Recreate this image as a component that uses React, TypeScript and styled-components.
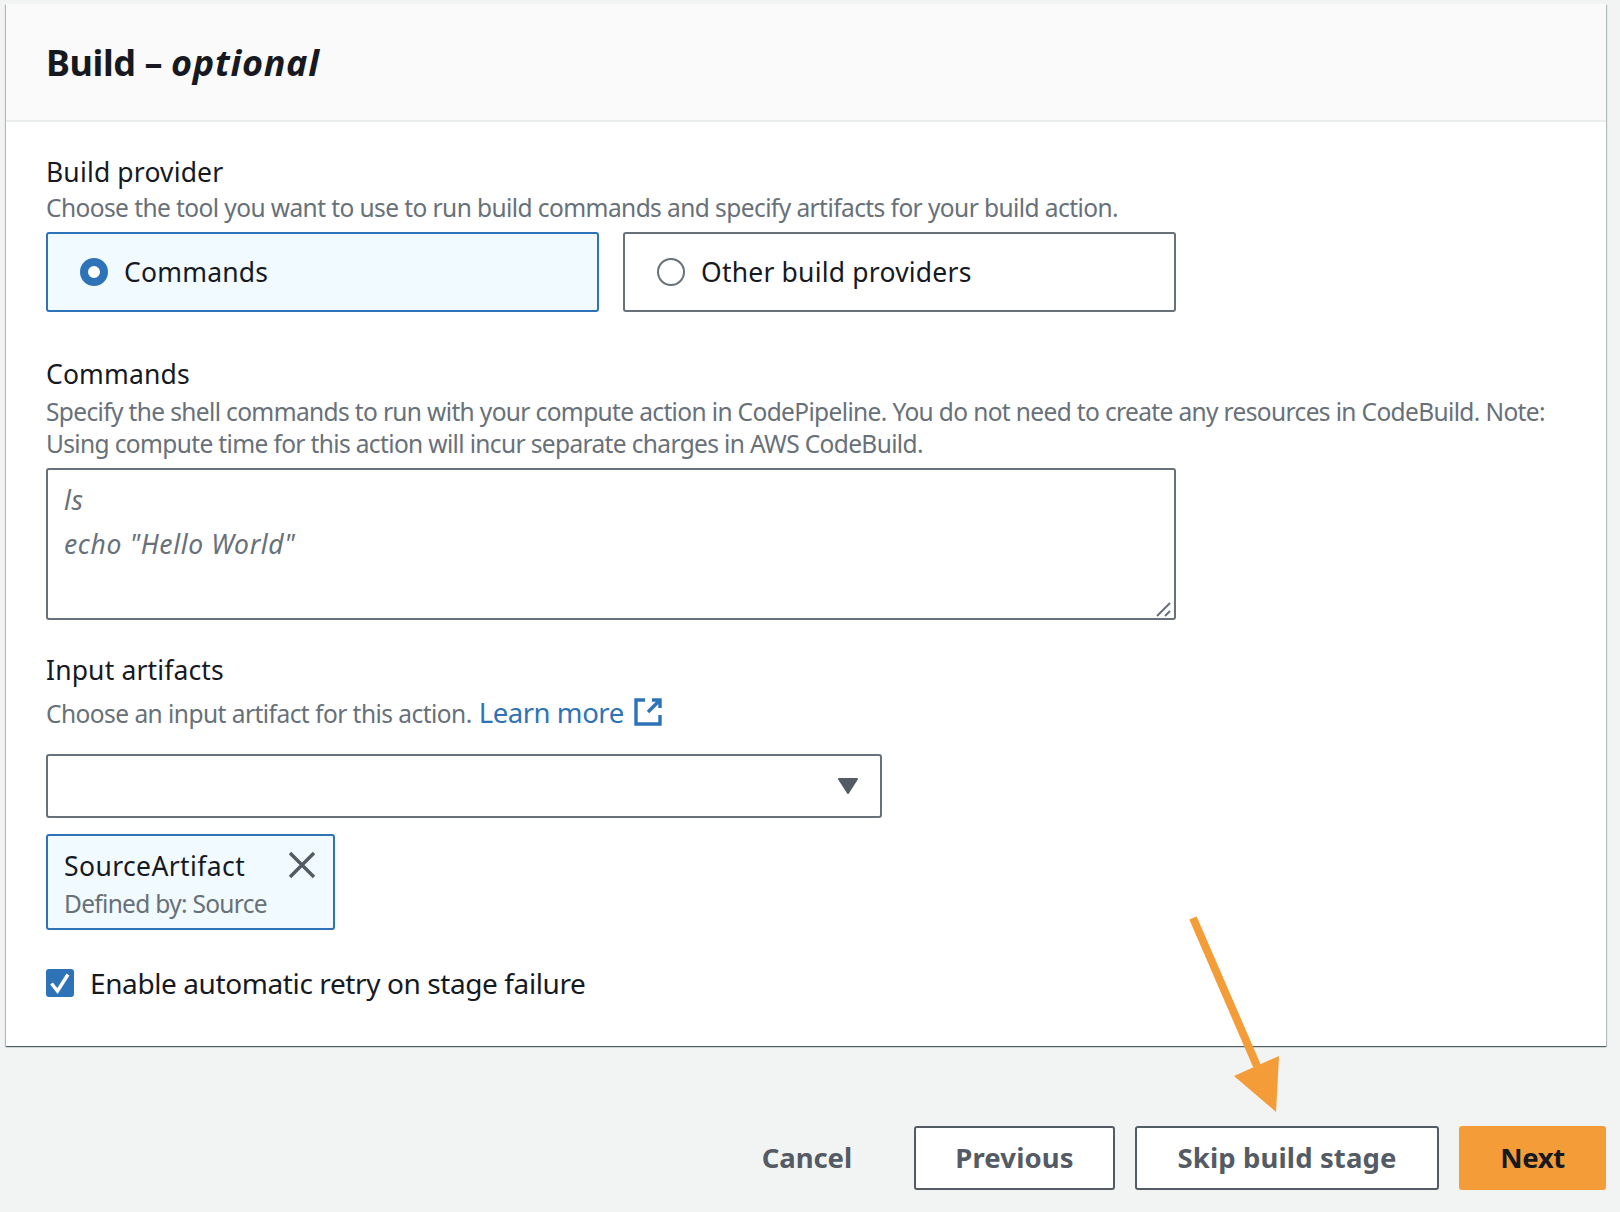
import React from "react";
import styled, { createGlobalStyle } from "styled-components";

const Global = createGlobalStyle`
  html, body { margin: 0; padding: 0; background: #f2f3f3; }
  * { box-sizing: border-box; }
`;

const Page = styled.div`
  position: relative;
  width: 1620px;
  height: 1212px;
  overflow: hidden;
  padding: 4px 14px 0 6px;
  background: #f2f3f3;
  font-family: "Noto Sans", sans-serif;
  color: #16191f;
`;

const Card = styled.section`
  height: 1042px;
  background: #fff;
  box-shadow: 0 1px 1px 0 rgba(0, 28, 36, 0.5), 1px 1px 1px 0 rgba(0, 28, 36, 0.2), -1px 1px 1px 0 rgba(0, 28, 36, 0.2);
`;

const Header = styled.header`
  height: 118px;
  display: flex;
  align-items: center;
  padding: 1px 40px 0;
  background: #fafafa;
  border-bottom: 2px solid #eaeded;
`;

const Title = styled.h2`
  margin: 0;
  font-size: 36px;
  font-weight: 700;
  line-height: 44px;
  letter-spacing: -0.4px;
  em { font-style: italic; letter-spacing: 0.7px; }
`;

const Body = styled.div`
  padding: 30px 40px 0;
`;

const Label = styled.div`
  font-size: 26.5px;
  line-height: 40px;
  letter-spacing: 0.15px;
`;

const Desc = styled.div<{ $mt?: number; $ls?: number }>`
  font-size: 24.5px;
  line-height: 32px;
  color: #687078;
  letter-spacing: ${(p) => p.$ls ?? -0.6}px;
  margin-top: ${(p) => p.$mt ?? 0}px;
`;

const Tiles = styled.div`
  display: flex;
  gap: 24px;
  width: 1130px;
  margin-top: 8px;
`;

const Tile = styled.div<{ $on?: boolean }>`
  flex: 1;
  height: 80px;
  display: flex;
  align-items: center;
  gap: 16px;
  padding-left: 32px;
  border: 2px solid ${(p) => (p.$on ? "#2e73b8" : "#687078")};
  border-radius: 3px;
  background: ${(p) => (p.$on ? "#f1faff" : "#fff")};
`;

const Radio = styled.span<{ $on?: boolean }>`
  width: 28px;
  height: 28px;
  flex: none;
  border-radius: 50%;
  background: #fff;
  border: ${(p) => (p.$on ? "8.5px solid #2e73b8" : "2px solid #687078")};
`;

const TileText = styled.span`
  font-size: 26.5px;
  letter-spacing: 0.2px;
`;

const CommandsLabel = styled(Label)`
  margin-top: 42px;
`;

const TextArea = styled.div`
  position: relative;
  width: 1130px;
  height: 152px;
  margin-top: 8px;
  padding: 8px 16px;
  border: 2px solid #687078;
  border-radius: 3px;
  font-size: 26.5px;
  line-height: 44px;
  font-style: italic;
  color: #687078;
  letter-spacing: 0.65px;
`;

const Grip = styled.svg`
  position: absolute;
  right: 0;
  bottom: 0;
`;

const ArtifactsLabel = styled(Label)`
  margin-top: 30px;
`;

const DescRow = styled.div`
  display: flex;
  align-items: center;
  margin-top: 6px;
  height: 36px;
`;

const LearnMore = styled.a`
  display: inline-flex;
  align-items: center;
  gap: 9px;
  margin: 0 0 4px 7px;
  font-size: 27.5px;
  letter-spacing: -0.45px;
  color: #2e73b8;
`;

const Select = styled.div`
  width: 836px;
  height: 64px;
  margin-top: 22px;
  display: flex;
  align-items: center;
  justify-content: flex-end;
  padding: 0 21px 0 0;
  border: 2px solid #687078;
  border-radius: 3px;
`;

const Token = styled.div`
  position: relative;
  width: 289px;
  height: 96px;
  margin-top: 16px;
  padding: 12px 16px 0;
  background: #f1faff;
  border: 2px solid #2e73b8;
  border-radius: 3px;
`;

const TokenName = styled.div`
  font-size: 26.5px;
  line-height: 36px;
  letter-spacing: 0.4px;
  margin-bottom: 2px;
`;

const TokenSub = styled.div`
  font-size: 24.5px;
  line-height: 36px;
  color: #687078;
  letter-spacing: -0.7px;
`;

const Dismiss = styled.svg`
  position: absolute;
  top: 15px;
  right: 17px;
`;

const CheckRow = styled.div`
  display: flex;
  align-items: center;
  gap: 16px;
  margin-top: 34px;
`;

const Check = styled.span`
  width: 28px;
  height: 28px;
  display: flex;
  align-items: center;
  justify-content: center;
  border-radius: 3px;
  background: #2e73b8;
`;

const CheckText = styled.span`
  font-size: 28px;
  letter-spacing: -0.4px;
`;

const Footer = styled.footer`
  display: flex;
  align-items: center;
  justify-content: flex-end;
  margin-top: 80px;
  gap: 20px;
`;

const Plain = styled.button`
  margin-right: 42px;
  padding: 0 0 2px;
  border: 0;
  background: none;
  font: 700 27.5px "Noto Sans", sans-serif;
  letter-spacing: -0.1px;
  color: #545b64;
`;

const Outline = styled.button<{ $w: number }>`
  width: ${(p) => p.$w}px;
  height: 64px;
  padding: 0 0 2px;
  border: 2px solid #545b64;
  border-radius: 3px;
  background: #fff;
  font: 700 27.5px "Noto Sans", sans-serif;
  letter-spacing: 0.12px;
  color: #545b64;
`;

const Primary = styled.button`
  width: 147px;
  height: 64px;
  padding: 0 0 2px;
  border: 0;
  border-radius: 3px;
  background: #f39c38;
  font: 700 27.5px "Noto Sans", sans-serif;
  letter-spacing: -0.4px;
  color: #16191f;
`;

const Arrow = styled.svg`
  position: absolute;
  left: 0;
  top: 0;
  pointer-events: none;
`;

export default function App() {
  return (
    <Page>
      <Global />
      <Card>
        <Header>
          <Title>
            Build – <em>optional</em>
          </Title>
        </Header>
        <Body>
          <Label>Build provider</Label>
          <Desc $ls={-0.58}>Choose the tool you want to use to run build commands and specify artifacts for your build action.</Desc>
          <Tiles>
            <Tile $on>
              <Radio $on />
              <TileText>Commands</TileText>
            </Tile>
            <Tile>
              <Radio />
              <TileText>Other build providers</TileText>
            </Tile>
          </Tiles>
          <CommandsLabel>Commands</CommandsLabel>
          <Desc $mt={2} $ls={-0.64}>
            Specify the shell commands to run with your compute action in CodePipeline. You do not need to create any resources in CodeBuild. Note:
            <br />
            Using compute time for this action will incur separate charges in AWS CodeBuild.
          </Desc>
          <TextArea>
            ls
            <br />
            echo "Hello World"
            <Grip width="20" height="20" viewBox="0 0 20 20">
              <path d="M3 18 L16 5 M11 18 L16 13" stroke="#687078" strokeWidth="2" fill="none" />
            </Grip>
          </TextArea>
          <ArtifactsLabel>Input artifacts</ArtifactsLabel>
          <DescRow>
            <Desc $ls={-0.54}>Choose an input artifact for this action.</Desc>
            <LearnMore>
              Learn more
              <svg width="30" height="30" viewBox="0 0 30 30" fill="none" stroke="#2e73b8" strokeWidth="3.4">
                <path d="M12 3 H3 V27 H27 V18" />
                <path d="M19 3 H27 V11 M27 3 L15 15" />
              </svg>
            </LearnMore>
          </DescRow>
          <Select>
            <svg width="22" height="16" viewBox="0 0 22 16">
              <path d="M2 1 H20 L11 15 Z" fill="#545b64" stroke="#545b64" strokeWidth="2" strokeLinejoin="round" />
            </svg>
          </Select>
          <Token>
            <TokenName>SourceArtifact</TokenName>
            <TokenSub>Defined by: Source</TokenSub>
            <Dismiss width="28" height="28" viewBox="0 0 28 28">
              <path d="M2 2 L26 26 M26 2 L2 26" stroke="#545b64" strokeWidth="3.4" fill="none" />
            </Dismiss>
          </Token>
          <CheckRow>
            <Check>
              <svg width="22" height="22" viewBox="0 0 22 22">
                <path d="M2.5 11.5 L8.5 19 L19 2.5" stroke="#fff" strokeWidth="3.4" fill="none" />
              </svg>
            </Check>
            <CheckText>Enable automatic retry on stage failure</CheckText>
          </CheckRow>
        </Body>
      </Card>
      <Footer>
        <Plain>Cancel</Plain>
        <Outline $w={201}>Previous</Outline>
        <Outline $w={304}>Skip build stage</Outline>
        <Primary>Next</Primary>
      </Footer>
      <Arrow width="1620" height="1212" viewBox="0 0 1620 1212">
        <path d="M1193 918 L1257 1066" stroke="#f39c38" strokeWidth="8" fill="none" />
        <path d="M1234 1076 L1279 1056 L1276 1112 Z" fill="#f39c38" />
      </Arrow>
    </Page>
  );
}
